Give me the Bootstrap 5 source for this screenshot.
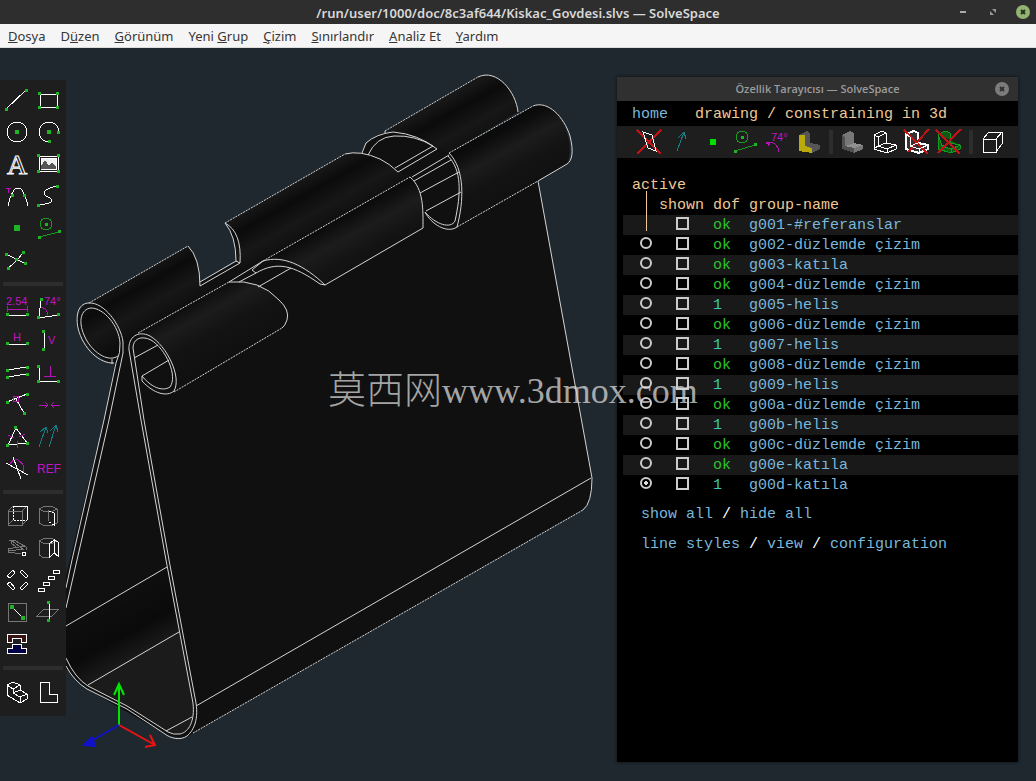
<!DOCTYPE html>
<html lang="tr">
<head>
<meta charset="utf-8">
<meta name="viewport" content="width=device-width, initial-scale=1">
<title>Kiskac_Govdesi.slvs — SolveSpace</title>
<link rel="stylesheet" href="https://cdn.jsdelivr.net/npm/bootstrap@5.3.0/dist/css/bootstrap.min.css">
<style>
  body { font-family: "Noto Sans", "Open Sans", sans-serif; font-size: 13px; line-height: 20px; background: #1f282e; color: #ddd; }
  button { background: none; border: 0; padding: 0; color: inherit; display: block; }
  .title-strip { display: grid; grid-template-columns: 1fr auto 1fr; height: 24px; background: #2e2e2e; color: #d8d8d8; font-weight: 600; font-size: 13px; }
  .win-title { padding-top: 2px; }
  .win-buttons { gap: 14px; padding-right: 5px; }
  .win-buttons svg, .close-btn svg { display: block; width: 16px; height: 16px; }
  .menu-strip { height: 24px; background: #f6f5f5; gap: 15px; padding: 0 8px; border-bottom: 1px solid #dcdcdc; }
  .menu-strip a { color: #363636; text-decoration: none; line-height: 24px; white-space: nowrap; }
  .workspace { min-height: 730px; }
  .model { inset: 0; }
  .tool-palette { left: 0; top: 32px; width: 66px; padding: 4px 1px 8px; background: #1e1e1e; }
  .tool-grid { display: grid; grid-template-columns: 32px 32px; }
  .tool-sep { height: 4px; margin: 6px 2px; background: #2d2d2d; }
  .ico { display: block; width: 32px; height: 32px; fill: none; stroke: #fff; shape-rendering: crispEdges; }
  .ico text { stroke: none; fill: #c314c3; font-family: "Liberation Sans", sans-serif; font-size: 11px; }
  .ico .g { stroke: #149c1e; }
  .ico .m { stroke: #b414b4; }
  .ico .t { stroke: #157d85; }
  .ico .y { stroke: #777; }
  .ico .r { stroke: #c01414; }
  .ico .d { fill: #1fb325; stroke: none; }
  .browser-win { top: 29px; right: 18px; bottom: 19px; width: 401px; background: #000; box-shadow: 0 0 3px #0a0f13; font-family: "Liberation Mono", monospace; font-size: 15px; color: #f0c896; }
  .browser-win a { color: #7ab8dc; text-decoration: none; }
  .browser-title { display: grid; grid-template-columns: 1fr auto 1fr; height: 24px; background: #303030; color: #9b9b9b; font-family: "Open Sans", sans-serif; font-weight: 600; font-size: 11px; }
  .close-btn { padding-right: 8px; }
  .crumbs { height: 25px; padding: 3px 15px 0; gap: 27px; }
  .view-tools { height: 32px; padding-left: 16px; background: #1e1e1e; }
  .v-sep { width: 4px; height: 24px; margin: 4px; background: #2d2d2d; }
  .groups { width: 395px; margin: 17px 0 0 6px; table-layout: fixed; border-collapse: collapse; }
  .groups th, .groups td { height: 20px; padding: 2px 0 0; font-weight: 400; line-height: 18px; white-space: nowrap; vertical-align: top; }
  .groups tbody tr:nth-child(odd) { background: #191919; }
  .groups .lead-col { padding-left: 9px; position: relative; }
  .groups .lead-col::after { content: ""; position: absolute; left: 23px; top: 16px; height: 40px; width: 1px; background: #f0c896; }
  .groups .c1 { width: 36px; } .groups .c2 { width: 54px; } .groups .c3 { width: 36px; }
  .groups td:nth-child(1), .groups td:nth-child(2) { padding-left: 17px; }
  .groups input { appearance: none; display: block; width: 13px; height: 13px; margin: 0; border: 2px solid #ccc; background: none; }
  .groups input[type=radio] { width: 12px; height: 12px; border-radius: 50%; }
  .groups input[type=radio]:checked { background: radial-gradient(circle, #ddd 0 2px, transparent 2px); }
  .ok { color: #2bc42b; } .num { color: #3cc8b4; }
  .foot-links { padding: 10px 24px; gap: 10px; color: #fff; }
  .stamp { left: 328px; top: 311px; font-family: "Liberation Serif", serif; font-size: 36px; line-height: 56px; color: rgba(215,215,215,.75); pointer-events: none; white-space: nowrap; }
  .stamp span { font-family: "Noto Sans CJK SC", sans-serif; font-weight: 300; font-size: 38px; }
</style>
</head>
<body class="min-vh-100 d-flex flex-column overflow-hidden">
<header>
  <div class="title-strip align-items-center">
    <span></span>
    <span class="win-title text-nowrap">/run/user/1000/doc/8c3af644/Kiskac_Govdesi.slvs — SolveSpace</span>
    <div class="win-buttons d-flex justify-content-end">
      <button type="button" aria-label="Küçült"><svg viewBox="0 0 16 16"><path d="M5 8h6" stroke="#aaa" stroke-width="2"/></svg></button>
      <button type="button" aria-label="Büyüt"><svg viewBox="0 0 16 16"><path d="M7 5h4v4zM5 7v4h4z" fill="#999"/></svg></button>
      <button type="button" aria-label="Kapat"><svg viewBox="0 0 16 16"><circle cx="8" cy="8" r="7" fill="#92b372"/><path d="M6 6l4 4m0-4l-4 4" stroke="#263018" stroke-width="2"/></svg></button>
    </div>
  </div>
  <nav class="menu-strip d-flex">
    <a href="#"><u>D</u>osya</a><a href="#">D<u>ü</u>zen</a><a href="#"><u>G</u>örünüm</a><a href="#">Yeni <u>G</u>rup</a><a href="#"><u>Ç</u>izim</a><a href="#"><u>S</u>ınırlandır</a><a href="#"><u>A</u>naliz Et</a><a href="#"><u>Y</u>ardım</a>
  </nav>
</header>

<main class="workspace position-relative flex-grow-1">
  <svg class="model position-absolute w-100 h-100" viewBox="0 48 1036 733" preserveAspectRatio="xMinYMin meet" fill="none" stroke="#d4d4d4" stroke-width="1">
    <defs>
      <linearGradient id="ga" gradientUnits="userSpaceOnUse" x1="138" y1="272" x2="166" y2="322"><stop offset="0" stop-color="#171717"/><stop offset=".25" stop-color="#0b0b0b"/><stop offset=".6" stop-color="#171717"/><stop offset="1" stop-color="#0d0d0d"/></linearGradient>
      <linearGradient id="gb" gradientUnits="userSpaceOnUse" x1="180" y1="305" x2="212" y2="364"><stop offset="0" stop-color="#0b0b0b"/><stop offset=".3" stop-color="#1c1c1c"/><stop offset=".6" stop-color="#131313"/><stop offset="1" stop-color="#101010"/></linearGradient>
      <linearGradient id="gc" gradientUnits="userSpaceOnUse" x1="110" y1="600" x2="140" y2="655"><stop offset="0" stop-color="#0f0f0f"/><stop offset=".6" stop-color="#0a0a0a"/><stop offset="1" stop-color="#1a1a1a"/></linearGradient>
    </defs>
    <!-- solid faces -->
    <g stroke="none">
      <path fill="#101010" d="M123 340L200 282 240 260 398 172 437 149H449L540 130 538 181 592 478Q592 503 583 509L193 733Q184 741 165 734L87 689Q74 680 60 660V600L104 420 115 362Z"/>
      <path fill="url(#gc)" d="M66 626L167 567 179 632 88 686Q76 678 66 658Z"/>
      <path fill="#1b1b1b" d="M88 686L179 632 193 703Q196 728 180 734L168 732 127 706Z"/>
      <path fill="url(#ga)" d="M89 303L188 246Q200 258 200 286L225 284 138 333 125 350 114 363C99 361 77 340 77 322Q79 305 89 303Z"/>
      <path fill="url(#ga)" d="M225 223L345 154Q374 148 398 172L410 177 263 260 240 267 236 261Q236 236 225 223Z"/>
      <path fill="url(#ga)" d="M385 131L478 77C497 69 516 92 518 112L449 153 437 149 410 134Z"/>
      <path fill="#101010" d="M362 153Q368 134 390 132T437 149L398 172Q380 155 362 153Z"/>
      <path fill="url(#gb)" d="M449 153L533 106C558 97 577 140 567 164L457 227C464 200 464 170 449 153Z"/>
      <path fill="url(#gb)" d="M263 260L410 177Q425 190 423 228L325 285Q292 257 263 260Z"/>
      <path fill="url(#gb)" d="M138 333L229 282Q270 280 288 311 288 324 282 328L174 392C180 360 155 332 138 333Z"/>
    </g>
    <!-- back row of rolled tubes -->
    <path d="M114 363C100 364 83 349 78 328C75 312 80 303 89 303C104 302 121 325 123 342V353L109 420 77 560 66 608M116 363L104 420 72 560 66 588"/>
    <path d="M118 356C108 363 91 352 84 335C78 321 81 309 91 308C104 308 119 326 120 343Q121 352 116 363M112 359V364"/>
    <path d="M188 246Q200 258 200 286L240 263Q242 232 225 223Q236 236 236 261L200 282M236 261L240 263"/>
    <path d="M345 154Q360 150 380 159 390 164 398 172L437 149Q418 134 393 132 376 134 366 143L362 153M368 155Q376 137 394 136 415 135 433 146L395 168M385 131V133"/>
    <path d="M478 77C497 68 516 92 518 112"/>
    <!-- front row of rolled tubes -->
    <path d="M533 106C548 100 564 117 570 136 574 152 572 161 567 164M449 153C465 169 464 201 457 227C447 234 431 224 425 212C436 225 451 229 455 221C461 194 462 170 448 156M412 177L449 155M414 181L451 160M420 193L459 172M426 211L461 192"/>
    <path d="M410 177C424 189 423 210 423 228L325 285C304 265 283 255 263 261L252 270 256 273C277 261 293 265 320 284L325 285M229 282L263 261M239 282L256 273M258 287L291 268"/>
    <path d="M229 282Q260 279 279 300 290 310 287 320 285 326 282 328M142 376C151 387 162 392 170 387C178 376 166 349 151 340C141 335 133 339 133 348L144 420 169 560 196 703C199 722 192 732 187 736 180 741 170 738 165 734L127 709 87 689Q74 681 66 666M142 376V381C154 394 167 397 174 391C182 377 167 346 150 336 138 330 128 337 129 350L141 420 166 560 193 703C195 721 189 732 180 734Q173 735 168 732L127 706 88 686Q75 678 66 658M134 358L158 345M142 376L169 360"/>
    <!-- long straight edges -->
    <path d="M66 626L167 567M88 685L179 632M166 731L192 717M196 706L591 478M538 181L592 478Q592 503 583 510M567 164L538 181"/>
    <g stroke-dasharray="2 1"><path d="M89 303L188 246M225 223L345 154M385 131L478 77M449 153L533 106M457 227L538 181M263 261L410 177M138 333L229 282M174 392L282 328M193 733L583 510"/></g>
    <!-- axes -->
    <g stroke-width="2"><path stroke="#00e600" d="M119 725V685M114 695L119 684 124 695"/><path stroke="#ee1212" d="M119 725L155 745M150 735L155 745 145 747"/><path stroke="#1212c8" fill="#1212c8" d="M119 725L84 745M92 737L84 745 95 746 92 737"/></g>
  </svg>

  <aside class="tool-palette position-absolute">
    <div class="tool-grid">
      <button type="button" aria-label="Çizgi"><svg class="ico" viewBox="1 0 32 32"><path d="M6 25L26 6"/><path class="d" d="M5 24h3v3H5zM25 5h3v3h-3z"/></svg></button>
      <button type="button" aria-label="Dikdörtgen"><svg class="ico" viewBox="1 0 32 32"><path d="M8 10H25V23H8z"/><path class="d" d="M6 8h3v3H6zM24 8h3v3h-3zM6 22h3v3H6zM24 22h3v3h-3z"/></svg></button>
      <button type="button" aria-label="Daire"><svg class="ico" viewBox="0 0 32 32"><circle cx="16" cy="16" r="10"/><path class="d" d="M14 14h4v4h-4z"/></svg></button>
      <button type="button" aria-label="Yay"><svg class="ico" viewBox="0 0 32 32"><path d="M26 16A10 10 0 1 0 16 26"/><path class="d" d="M14 14h4v4h-4zM24 15h3v3h-3zM15 24h3v3h-3z"/></svg></button>
      <button type="button" aria-label="Metin"><svg class="ico" viewBox="0 0 32 32"><text x="6" y="26" style="font:28px 'Liberation Serif',serif;fill:#1e1e1e;stroke:#fff">A</text></svg></button>
      <button type="button" aria-label="Resim"><svg class="ico" viewBox="1 1 32 32"><path d="M7 9H26V24H7z"/><path d="M9 11H24V22H9z" fill="#eee"/><path d="M9 22V19L13 13 17 19 20 15 24 20V22z" fill="#555" stroke="none"/><path class="d" d="M5 7h3v3H5zM25 7h3v3h-3zM5 23h3v3H5zM25 23h3v3h-3z"/></svg></button>
      <button type="button" aria-label="Teğet yay"><svg class="ico" viewBox="0 0 32 32"><path d="M7 26Q11 8 17 8T27 26"/><path class="d" d="M10 14h3v3h-3zM22 14h3v3h-3z"/><path class="m" d="M5 8h5M7 8v5"/></svg></button>
      <button type="button" aria-label="Bezier"><svg class="ico" viewBox="1 0 32 32"><path d="M25 6C16 8 12 10 12 13C12 17 20 17 20 21Q18 24 6 25"/><path class="d" d="M24 5h3v3h-3zM5 24h3v3H5z"/></svg></button>
      <button type="button" aria-label="Nokta"><svg class="ico" viewBox="0 0 32 32"><path class="d" d="M13 13h6v6h-6z"/></svg></button>
      <button type="button" aria-label="Yapı"><svg class="ico" viewBox="0 0 32 32"><circle class="g" cx="13" cy="12" r="6"/><path class="g" d="M6 25L26 20"/><path class="d" d="M12 11h3v3h-3zM5 24h3v3H5zM25 18h3v3h-3z"/></svg></button>
      <button type="button" aria-label="Böl"><svg class="ico" viewBox="1 0 32 32"><path d="M6 10L26 20M8 24Q18 17 23 8"/><path class="d" d="M5 9h3v3H5zM24 18h3v3h-3zM7 23h3v3H7zM22 7h3v3h-3zM15 14h3v3h-3z"/></svg></button>
    </div>
    <div class="tool-sep"></div>
    <div class="tool-grid">
      <button type="button" aria-label="Mesafe"><svg class="ico" viewBox="0 0 32 32"><text x="5" y="13">2.54</text><path class="m" d="M6 14v6M26 14v6M6 17H26"/><path d="M6 23H26"/><path class="d" d="M5 21h3v3H5zM25 21h3v3h-3z"/></svg></button>
      <button type="button" aria-label="Açı"><svg class="ico" viewBox="1 0 32 32"><text x="12" y="13">74°</text><path class="m" d="M8 15Q15 16 16 23"/><path d="M9 7L7 26 26 23"/><path class="d" d="M8 6h3v3H8zM5 24h3v3H5zM25 21h3v3h-3z"/></svg></button>
      <button type="button" aria-label="Yatay"><svg class="ico" viewBox="0 0 32 32"><text x="12" y="17">H</text><path d="M6 20H26"/><path class="d" d="M5 18h3v3H5zM25 18h3v3h-3z"/></svg></button>
      <button type="button" aria-label="Dikey"><svg class="ico" viewBox="1 0 32 32"><text x="16" y="20">V</text><path d="M12 7V26"/><path class="d" d="M10 6h3v3h-3zM10 24h3v3h-3z"/></svg></button>
      <button type="button" aria-label="Paralel"><svg class="ico" viewBox="0 0 32 32"><path d="M6 14L26 11M6 21L26 18"/><path class="d" d="M5 13h3v3H5zM25 10h3v3h-3zM5 20h3v3H5zM25 17h3v3h-3z"/></svg></button>
      <button type="button" aria-label="Dik"><svg class="ico" viewBox="1 0 32 32"><path class="m" d="M18 10V20M12 20H24"/><path d="M7 10V25H26"/><path class="d" d="M5 9h3v3H5zM5 24h3v3H5zM25 24h3v3h-3z"/></svg></button>
      <button type="button" aria-label="Üzerinde"><svg class="ico" viewBox="0 0 32 32"><path d="M6 14L26 6M15 11L23 25"/><circle class="m" cx="15" cy="11" r="3"/><path class="d" d="M5 13h3v3H5zM25 5h3v3h-3zM22 24h3v3h-3z"/></svg></button>
      <button type="button" aria-label="Simetrik"><svg class="ico" viewBox="0 0 32 32"><path class="m" d="M6 17H15M12 14L15 17 12 20M27 17H18M21 14L18 17 21 20"/></svg></button>
      <button type="button" aria-label="Eşit"><svg class="ico" viewBox="0 0 32 32"><path d="M15 8L7 25 26 23z"/><path class="m" d="M7 15L13 18M18 17L24 14M16 21V28"/><path class="d" d="M13 6h3v3h-3zM5 24h3v3H5zM25 22h3v3h-3z"/></svg></button>
      <button type="button" aria-label="Aynı yön"><svg class="ico" viewBox="1 0 32 32"><path class="t" d="M7 27L14 7M8 12L14 7 16 13M17 27L24 5M18 11L24 5 26 12"/></svg></button>
      <button type="button" aria-label="Diğer açı"><svg class="ico" viewBox="0 0 32 32"><path class="m" d="M9 12Q12 7 17 8 24 12 23 20"/><path d="M5 11L27 23M12 5L20 27"/></svg></button>
      <button type="button" aria-label="Referans"><svg class="ico" viewBox="0 0 32 32"><text x="4" y="21" style="font-size:12px">REF</text></svg></button>
    </div>
    <div class="tool-sep"></div>
    <div class="tool-grid">
      <button type="button" aria-label="Uzat"><svg class="ico" viewBox="1 1 32 32"><path class="y" d="M8 12H22V26H8zM8 12L13 7M22 12L27 7M22 26L27 21M8 26L13 21"/><path d="M13 7H27V21"/><path stroke-dasharray="2 1" d="M13 7V21H27"/></svg></button>
      <button type="button" aria-label="Döndür"><svg class="ico" viewBox="1 0 32 32"><path class="y" d="M7 9V23Q16 29 25 23V9M7 9Q16 3 25 9 16 15 7 9M16 10V21"/><path d="M17 11L22 13V25L17 22" stroke-dasharray="2 1"/><path d="M22 13V26"/></svg></button>
      <button type="button" aria-label="Helis"><svg class="ico" viewBox="0 0 32 32"><path class="y" d="M7 17L23 14M8 19L23 17M10 8L22 17M13 8L25 15M8 8H13M7 17V20L20 22M23 13L26 16 25 18M10 8V11L15 15"/><circle cx="23" cy="22" r="2"/></svg></button>
      <button type="button" aria-label="Çevir"><svg class="ico" viewBox="1 0 32 32"><path class="y" d="M7 9V23Q12 27 17 25M7 9Q16 3 25 9M7 9Q16 15 25 9"/><path d="M17 12L22 8V21L17 26zM22 8L26 10V24L22 21"/></svg></button>
      <button type="button" aria-label="Döner kopya"><svg class="ico" viewBox="0 0 32 32"><path d="M6 12L12 6 14 9 9 14zM19 8L21 6 27 12 25 14zM6 20L9 18 14 24 12 26zM19 24L25 18 27 20 21 26z"/></svg></button>
      <button type="button" aria-label="Öteleme kopyası"><svg class="ico" viewBox="1 0 32 32"><path d="M6 24h6v3H6zM11 18h6v3h-6zM16 12h6v3h-6zM21 6h6v3h-6z"/></svg></button>
      <button type="button" aria-label="Düzlemde çizim"><svg class="ico" viewBox="1 0 32 32"><path class="y" d="M8 7H26V25H8z"/><path d="M12 11L23 22"/><path class="d" d="M10 9h4v4h-4zM21 20h4v4h-4z"/></svg></button>
      <button type="button" aria-label="3 boyutta çizim"><svg class="ico" viewBox="1 0 32 32"><path class="y" d="M5 20L12 13H27L20 20z"/><path d="M17 6V25"/><path class="d" d="M15 5h3v3h-3zM15 23h3v3h-3z"/></svg></button>
      <button type="button" aria-label="Birleştir"><svg class="ico" viewBox="1 1 32 32"><path fill="#3a1414" d="M7 7H26V15H21V11H12V15H7z"/><path fill="#000046" d="M7 26V21H12V17H21V21H26V26z"/></svg></button>
    </div>
    <div class="tool-sep"></div>
    <div class="tool-grid">
      <button type="button" aria-label="İzometrik"><svg class="ico" viewBox="0 0 32 32"><path d="M6 9L12 6 19 9V14L26 18V23L19 27 6 19zM6 9L12 13 19 9M12 13V17L19 21 26 18M19 21V27M12 17L19 14"/></svg></button>
      <button type="button" aria-label="Düzleme hizala"><svg class="ico" viewBox="1 0 32 32"><path d="M8 6H17V18H25V26H8z"/></svg></button>
    </div>
  </aside>

  <section class="browser-win position-absolute">
    <div class="browser-title align-items-center">
      <span></span><span>Özellik Tarayıcısı — SolveSpace</span>
      <div class="close-btn d-flex justify-content-end"><button type="button" aria-label="Kapat"><svg viewBox="0 0 16 16"><circle cx="8" cy="8" r="7" fill="#7c7c7c"/><path d="M6 6l4 4m0-4l-4 4" stroke="#303030" stroke-width="2"/></svg></button></div>
    </div>
    <div class="crumbs d-flex align-items-center"><a href="#">home</a><span>drawing / constraining in 3d</span></div>
    <div class="view-tools d-flex">
      <button type="button" aria-label="Çalışma düzlemleri"><svg class="ico" viewBox="0 0 32 32"><path class="r" stroke-width="2" d="M4 4L28 28M28 4L4 28"/><path d="M10 6L19 9 23 25 15 22z"/></svg></button>
      <button type="button" aria-label="Normaller"><svg class="ico" viewBox="0 0 32 32"><path class="t" d="M12 25L19 6M13 12L19 6 21 13"/></svg></button>
      <button type="button" aria-label="Noktalar"><svg class="ico" viewBox="0 0 32 32"><path class="d" d="M13 13h6v6h-6z" style="fill:#00e000"/></svg></button>
      <button type="button" aria-label="Yapı çizgileri"><svg class="ico" viewBox="0 0 32 32"><circle class="g" cx="13" cy="11" r="6"/><path class="g" d="M6 25L26 19"/><path class="d" d="M12 10h3v3h-3zM5 24h3v3H5zM25 17h3v3h-3z"/></svg></button>
      <button type="button" aria-label="Kısıtlar"><svg class="ico" viewBox="0 0 32 32"><text x="10" y="15">74°</text><path class="m" d="M5 18L10 16Q17 18 18 26M5 16L10 16 7 20"/></svg></button>
      <button type="button" aria-label="Yüzler"><svg class="ico" viewBox="0 0 32 32" style="stroke:none"><path fill="#555" d="M6 9L14 5 17 7V17L27 19V23L19 27 10 25z"/><path fill="#b9a90c" d="M6 9H12V20L19 22V27L6 25z"/></svg></button>
      <span class="v-sep"></span>
      <button type="button" aria-label="Gölgeli"><svg class="ico" viewBox="1 0 32 32" style="stroke:none"><path fill="#777" d="M6 9L14 5 18 7V17L27 19V23L18 27 6 23z"/><path fill="#505050" d="M6 9L9 11V20L18 22V27L6 23z"/><path fill="#909090" d="M9 20L18 17 27 19 18 22z"/></svg></button>
      <button type="button" aria-label="Kenarlar"><svg class="ico" viewBox="1 0 32 32"><path d="M6 9L14 5 18 7V17L28 19V23L19 27 6 23zM6 9L10 11V20L19 23 28 19M19 23V27M10 11L18 7M10 20L18 17M6 23L10 20"/></svg></button>
      <button type="button" aria-label="Dış hatlar"><svg class="ico" viewBox="1 0 32 32"><path fill="#333" stroke-width="2" d="M6 8L14 5 18 7V17L28 19V23L19 27 6 23z"/><path class="r" stroke-width="2" d="M4 4L28 28M29 3L8 26"/><path d="M6 8L10 11V20L19 23 28 19M19 23V27M10 20L18 17"/></svg></button>
      <button type="button" aria-label="Ağ"><svg class="ico" viewBox="1 0 32 32"><path fill="#0c5a14" class="g" d="M6 8L14 5 18 7V17L28 19V23L19 27 6 23zM6 8L10 20 19 23 28 19M19 23V27M10 20L18 17"/><path class="r" stroke-width="2" d="M4 4L28 28M29 3L6 27"/></svg></button>
      <span class="v-sep"></span>
      <button type="button" aria-label="Gizli çizgiler"><svg class="ico" viewBox="1 0 32 32"><path d="M7 13H20V26H7zM7 13L13 6H26L20 13M26 6V18L20 26"/></svg></button>
    </div>
    <table class="groups">
      <colgroup><col class="c1"><col class="c2"><col class="c3"><col></colgroup>
      <thead>
        <tr><th colspan="4" class="lead-col">active</th></tr>
        <tr><th></th><th>shown</th><th>dof</th><th>group-name</th></tr>
      </thead>
      <tbody>
        <tr><td></td><td><input type="checkbox" aria-labelledby="g1"></td><td class="ok">ok</td><td><a href="#" id="g1">g001-#referanslar</a></td></tr>
        <tr><td><input type="radio" name="active" aria-labelledby="g2"></td><td><input type="checkbox" aria-labelledby="g2"></td><td class="ok">ok</td><td><a href="#" id="g2">g002-düzlemde çizim</a></td></tr>
        <tr><td><input type="radio" name="active" aria-labelledby="g3"></td><td><input type="checkbox" aria-labelledby="g3"></td><td class="ok">ok</td><td><a href="#" id="g3">g003-katıla</a></td></tr>
        <tr><td><input type="radio" name="active" aria-labelledby="g4"></td><td><input type="checkbox" aria-labelledby="g4"></td><td class="ok">ok</td><td><a href="#" id="g4">g004-düzlemde çizim</a></td></tr>
        <tr><td><input type="radio" name="active" aria-labelledby="g5"></td><td><input type="checkbox" aria-labelledby="g5"></td><td class="num">1</td><td><a href="#" id="g5">g005-helis</a></td></tr>
        <tr><td><input type="radio" name="active" aria-labelledby="g6"></td><td><input type="checkbox" aria-labelledby="g6"></td><td class="ok">ok</td><td><a href="#" id="g6">g006-düzlemde çizim</a></td></tr>
        <tr><td><input type="radio" name="active" aria-labelledby="g7"></td><td><input type="checkbox" aria-labelledby="g7"></td><td class="num">1</td><td><a href="#" id="g7">g007-helis</a></td></tr>
        <tr><td><input type="radio" name="active" aria-labelledby="g8"></td><td><input type="checkbox" aria-labelledby="g8"></td><td class="ok">ok</td><td><a href="#" id="g8">g008-düzlemde çizim</a></td></tr>
        <tr><td><input type="radio" name="active" aria-labelledby="g9"></td><td><input type="checkbox" aria-labelledby="g9"></td><td class="num">1</td><td><a href="#" id="g9">g009-helis</a></td></tr>
        <tr><td><input type="radio" name="active" aria-labelledby="ga0"></td><td><input type="checkbox" aria-labelledby="ga0"></td><td class="ok">ok</td><td><a href="#" id="ga0">g00a-düzlemde çizim</a></td></tr>
        <tr><td><input type="radio" name="active" aria-labelledby="gb0"></td><td><input type="checkbox" aria-labelledby="gb0"></td><td class="num">1</td><td><a href="#" id="gb0">g00b-helis</a></td></tr>
        <tr><td><input type="radio" name="active" aria-labelledby="gc0"></td><td><input type="checkbox" aria-labelledby="gc0"></td><td class="ok">ok</td><td><a href="#" id="gc0">g00c-düzlemde çizim</a></td></tr>
        <tr><td><input type="radio" name="active" aria-labelledby="ge0"></td><td><input type="checkbox" aria-labelledby="ge0"></td><td class="ok">ok</td><td><a href="#" id="ge0">g00e-katıla</a></td></tr>
        <tr><td><input type="radio" name="active" aria-labelledby="gd0" checked></td><td><input type="checkbox" aria-labelledby="gd0"></td><td class="num">1</td><td><a href="#" id="gd0">g00d-katıla</a></td></tr>
      </tbody>
    </table>
    <div class="foot-links d-flex flex-column">
      <div><a href="#">show all</a> / <a href="#">hide all</a></div>
      <div><a href="#">line styles</a> / <a href="#">view</a> / <a href="#">configuration</a></div>
    </div>
  </section>

  <div class="stamp position-absolute"><span>莫西网</span>www.3dmox.com</div>
</main>
<script src="https://cdn.jsdelivr.net/npm/bootstrap@5.3.0/dist/js/bootstrap.bundle.min.js"></script>
</body>
</html>
